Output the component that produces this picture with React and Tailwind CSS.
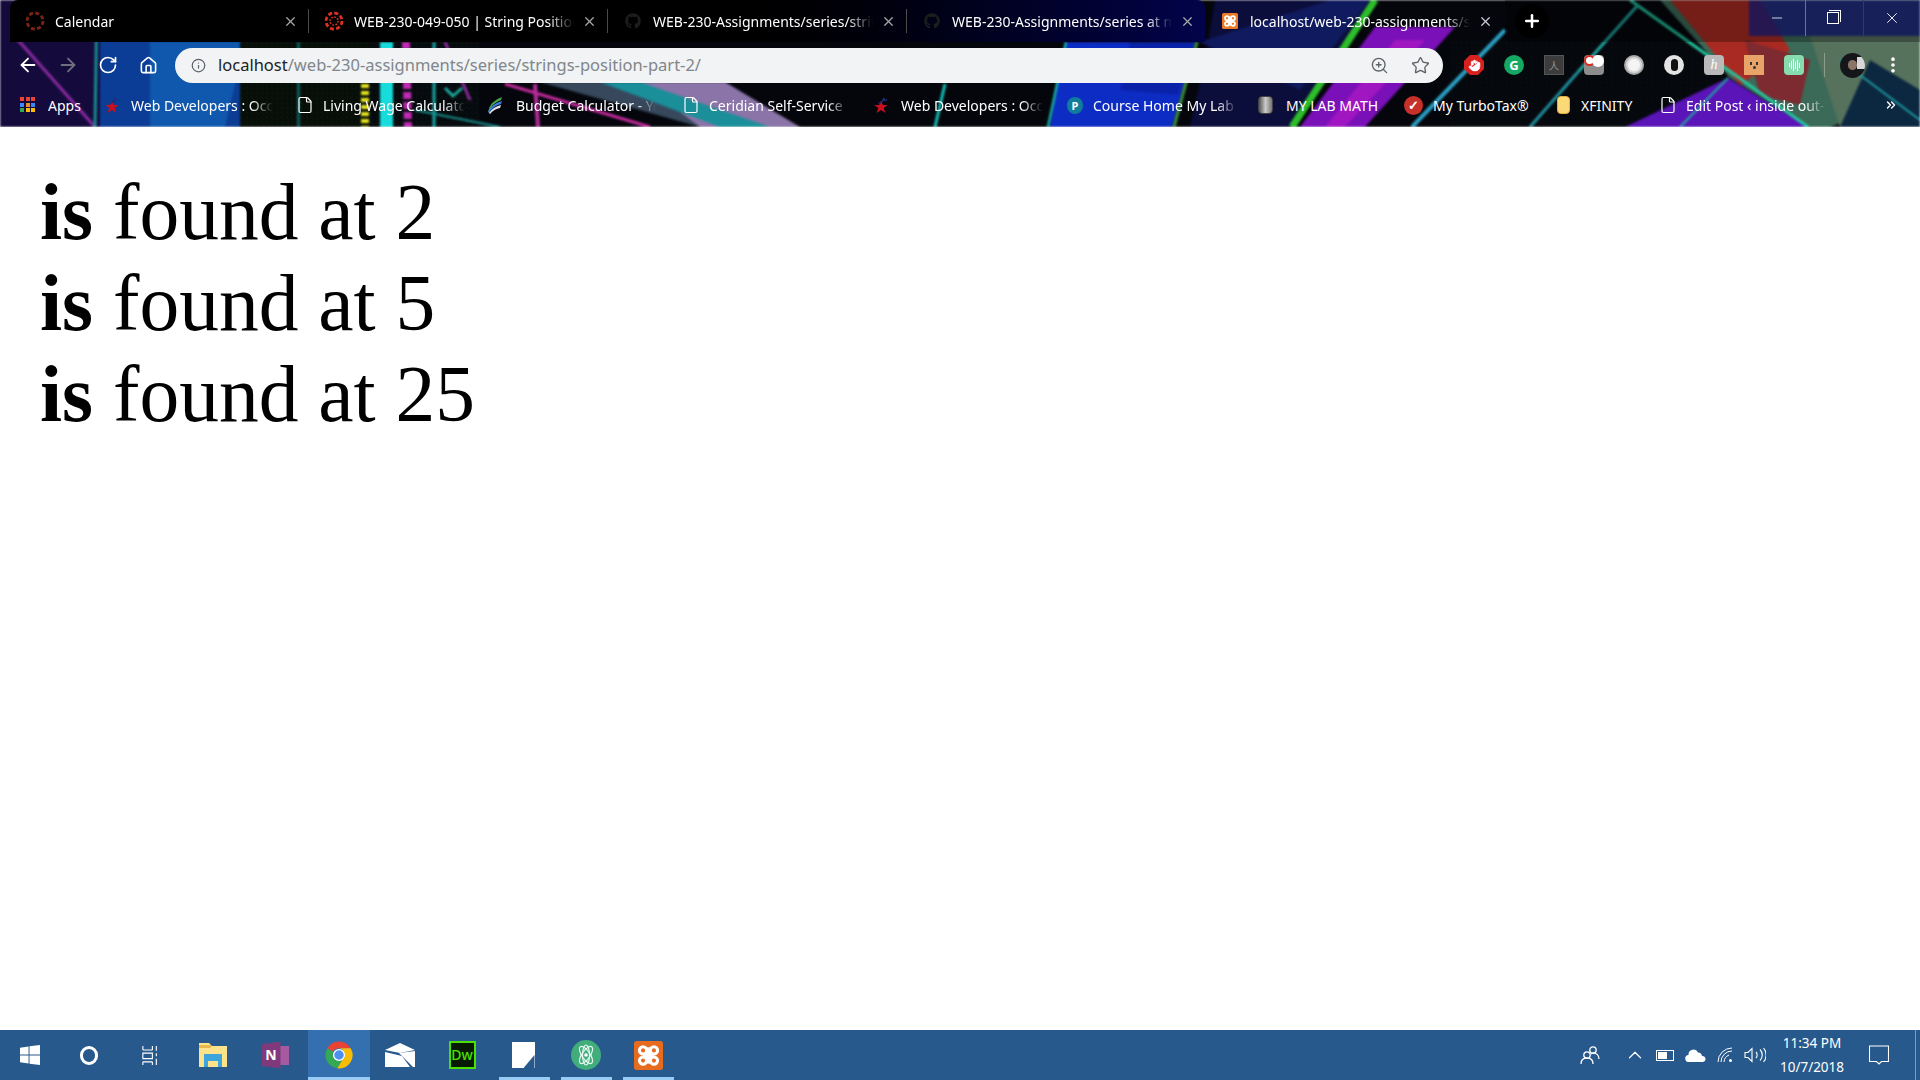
import React from "react";
import { ArrowLeft, ArrowRight, RotateCw, Home, Info, ZoomIn, Star, MoreVertical, File, X, Plus, Minus, ChevronsRight, ChevronUp, Hand } from "lucide-react";
import { FaGithub } from "react-icons/fa";

const Wallpaper = () => (
  <svg className="absolute inset-0 blur-[0.8px]" width="1920" height="127" viewBox="0 0 1920 127" preserveAspectRatio="none">
    <defs>
      <pattern id="dots" width="5" height="5" patternUnits="userSpaceOnUse">
        <rect x="1" y="2" width="1" height="1" fill="#2f5a2a" />
        <rect x="3" y="4" width="1" height="1" fill="#1c3a22" />
      </pattern>
    </defs>
    <rect width="1920" height="127" fill="#04060c" />
    <rect x="220" width="260" height="127" fill="url(#dots)" />
    <rect x="1450" y="40" width="300" height="87" fill="url(#dots)" opacity="0.5" />
    <rect x="0" width="100" height="127" fill="#140a3c" />
    <rect x="100" width="140" height="127" fill="#0c3d96" />
    <polygon points="150,42 245,42 225,127 150,127" fill="#0f58ad" />
    <line x1="18" y1="40" x2="95" y2="127" stroke="#8a2aa0" strokeWidth="3" />
    <line x1="97" y1="0" x2="95" y2="127" stroke="#178f92" strokeWidth="3" />
    <rect x="240" y="42" width="130" height="85" fill="#050a06" />
    <rect x="240" y="42" width="130" height="85" fill="url(#dots)" />
    <rect x="297" y="42" width="3" height="85" fill="#12a8a8" opacity="0.5" />
    <line x1="365" y1="84" x2="365" y2="127" stroke="#e8e81e" strokeWidth="8" strokeDasharray="4 3" />
    <rect x="380" y="42" width="13" height="85" fill="#17dcdc" />
    <line x1="406" y1="42" x2="408" y2="127" stroke="#c02ab5" strokeWidth="8" strokeDasharray="7 3" />
    <line x1="434" y1="42" x2="434" y2="127" stroke="#16a6a6" strokeWidth="3" />
    <polyline points="445,88 453,96 462,88" fill="none" stroke="#1cb5a8" strokeWidth="2.5" />
    <line x1="445" y1="42" x2="470" y2="100" stroke="#8d2a9e" strokeWidth="3" />
    <line x1="415" y1="110" x2="500" y2="127" stroke="#188f8f" strokeWidth="2" />
    <polygon points="540,82 700,82 800,127 700,127" fill="#37485c" />
    <polygon points="640,82 725,82 800,127 700,127" fill="#8a74a8" />
    <polygon points="600,82 640,82 770,127 720,127" fill="#1a8f9a" />
    <line x1="505" y1="84" x2="650" y2="127" stroke="#c92aa0" strokeWidth="3" />
    <line x1="535" y1="84" x2="538" y2="127" stroke="#b52c9a" strokeWidth="4" />
    <line x1="945" y1="84" x2="935" y2="127" stroke="#14c0b8" strokeWidth="3" />
    <polygon points="1065,42 1195,42 1172,127 1050,127" fill="#0d2cc4" />
    <polygon points="1130,42 1195,42 1178,95 1120,90" fill="#0a22a8" />
    <line x1="1066" y1="42" x2="1048" y2="127" stroke="#17b4a8" strokeWidth="2.5" />
    <line x1="1197" y1="42" x2="1174" y2="127" stroke="#3f8f3a" strokeWidth="3" />
    <polygon points="1215,0 1378,0 1320,80 1295,127 1190,127 1205,60" fill="#0b0d3a" />
    <polygon points="1200,42 1330,0 1370,0 1300,90" fill="#101a5e" />
    <line x1="1375" y1="0" x2="1292" y2="127" stroke="#2dbd2a" strokeWidth="7" />
    <polygon points="1375,27 1455,27 1365,127 1300,127" fill="#7a10b8" />
    <polygon points="1395,40 1425,40 1345,127 1325,127" fill="#a016c0" />
    <line x1="1505" y1="30" x2="1412" y2="127" stroke="#2a9fc4" strokeWidth="4" />
    <polygon points="1660,0 1920,0 1920,95 1830,127 1808,127 1730,78" fill="#3c6a58" />
    <polygon points="1670,0 1760,0 1790,50 1740,85" fill="#a82a22" />
    <polygon points="1745,40 1810,60 1800,105 1760,95" fill="#7d2a30" />
    <polygon points="1810,36 1920,36 1920,90 1840,127" fill="#56725c" />
    <polygon points="1870,60 1920,90 1920,127 1840,127" fill="#0c2740" />
    <polygon points="1728,78 1808,127 1625,127" fill="#5a14b8" />
    <line x1="1630" y1="0" x2="1808" y2="127" stroke="#23c8a0" strokeWidth="3" />
    <line x1="1638" y1="5" x2="1578" y2="72" stroke="#20a8a0" strokeWidth="3" />
    <line x1="1578" y1="72" x2="1530" y2="127" stroke="#1f8fa0" strokeWidth="3" />
    <line x1="1728" y1="78" x2="1680" y2="127" stroke="#1fa8a0" strokeWidth="2" />
    <line x1="1840" y1="60" x2="1920" y2="120" stroke="#1c9aa0" strokeWidth="2" />
    <polygon points="1749,0 1920,0 1920,36 1749,36" fill="#1a1f8c" opacity="0.78" />
  </svg>
);

const Canvas = ({ color, inner }) => (
  <svg width="20" height="20" viewBox="0 0 20 20" className="shrink-0 -m-0.5">
    <circle cx="10" cy="10" r="8" fill="none" stroke={color} strokeWidth="2.8" strokeDasharray="4 2.3" />
    {inner && <circle cx="10" cy="10" r="4" fill="none" stroke={color} strokeWidth="1.6" strokeDasharray="1.6 1.5" />}
  </svg>
);

const Xampp = ({ size = 16, fill = "#ea7a25" }) => (
  <svg width={size} height={size} viewBox="0 0 16 16" className="shrink-0">
    <rect width="16" height="16" rx="1.5" fill={fill} />
    <g fill="none" stroke="#fff" strokeWidth="1.7">
      <circle cx="5" cy="5.200" r="2" />
      <circle cx="11" cy="5.200" r="2" />
      <circle cx="5" cy="10.800" r="2" />
      <circle cx="11" cy="10.800" r="2" />
    </g>
    <rect x="5" y="6.800" width="6" height="2.400" fill="#fff" />
    <rect x="6.800" y="3.500" width="2.400" height="9" fill="#fff" />
  </svg>
);

const Tab = ({ icon, title, width, sep = true, active }) => (
  <div className={`flex items-center h-full pl-[17px] shrink-0 ${width}`}>
    <span className="w-4 h-4 flex items-center justify-center shrink-0">{icon}</span>
    <span className="ml-3 w-[220px] whitespace-nowrap overflow-hidden text-white text-[14px] [mask-image:linear-gradient(to_right,black_88%,transparent)]">{title}</span>
    <X size={15} strokeWidth={2} className={`ml-[8px] shrink-0 ${active ? "text-[#c8c8d8]" : "text-[#a8a8a8]"}`} />
    {sep && <span className="ml-auto w-px h-[24px] bg-[#4a4a4a]" />}
  </div>
);

const StarFlag = () => (
  <svg width="16" height="16" viewBox="0 0 18 18">
    <polygon points="9,4 11,9 16.500,9 12,12.500 14,18 9,14.500 4,18 6,12.500 1.500,9 7,9" fill="#c8101e" />
    <path d="M6 7 Q11 7 12 1 L13 4 L16 3" fill="none" stroke="#1d2f7a" strokeWidth="1.400" />
  </svg>
);

const Doc = () => <File size={18} strokeWidth={1.6} className="text-white shrink-0" />;

const Mark = ({ icon, text, iconBox, gap, w, fade = true }) => (
  <div className={`flex items-center shrink-0 ${iconBox}`}>
    <span className="w-4 h-4 flex items-center justify-center shrink-0">{icon}</span>
    <span className={`${gap} ${w} overflow-hidden whitespace-nowrap text-white text-[14px] ${fade ? "[mask-image:linear-gradient(to_right,black_85%,transparent)]" : ""}`}>{text}</span>
  </div>
);

const ExtIcon = ({ children }) => <div className="w-10 h-6 flex items-center justify-center shrink-0">{children}</div>;

const Bar = ({ w, active, under, children }) => (
  <div className={`relative h-full flex items-center justify-center shrink-0 ${w} ${active ? "bg-[#3470b0]" : ""}`}>
    {children}
    {under && <span className={`absolute bottom-0 h-[3px] bg-[#99ccf5] ${under}`} />}
  </div>
);

export default function App() {
  return (
    <div className="w-[1920px] h-screen overflow-hidden flex flex-col bg-white">
      <header className="relative h-[127px] shrink-0 overflow-hidden font-['Noto_Sans',sans-serif]">
        <Wallpaper />
        <div className="relative flex h-[42px] pl-[10px]">
          <div className="flex h-full w-[1195px] shrink-0 rounded-t-lg bg-linear-to-r from-black from-55% to-[#02034a]">
            <Tab width="w-[299px]" icon={<Canvas color="#7c2413" />} title="Calendar" />
            <Tab width="w-[299px]" icon={<Canvas color="#e2301f" inner />} title="WEB-230-049-050 | String Position" />
            <Tab width="w-[299px]" icon={<FaGithub size={16} className="text-[#1d1d1d]" />} title="WEB-230-Assignments/series/strings" />
            <Tab width="w-[298px]" sep={false} icon={<FaGithub size={16} className="text-[#1d1d1d]" />} title="WEB-230-Assignments/series at master" />
          </div>
          <Tab width="w-[300px]" sep={false} active icon={<Xampp />} title="localhost/web-230-assignments/series" />
          <div className="flex-1 flex items-start bg-black/30 rounded-bl-lg">
            <div className="ml-[10px] mt-1 w-[34px] h-[34px] rounded-full bg-black flex items-center justify-center">
              <Plus size={20} strokeWidth={3} className="text-white" />
            </div>
            <div className="ml-auto h-9 flex text-white">
              <div className="w-14 flex items-center justify-center"><Minus size={16} strokeWidth={1.2} /></div>
              <div className="w-[58px] flex items-center justify-center border-l border-[#1a9a9a] pr-1">
                <span className="relative w-3 h-3 border border-white"><span className="absolute -top-[3px] -right-[3px] w-3 h-3 border-t border-r border-white" /></span>
              </div>
              <div className="w-[57px] flex items-center justify-center border-l border-[#1a3aa0]"><X size={18} strokeWidth={1.2} /></div>
            </div>
          </div>
        </div>

        <div className="relative flex items-center h-[46px]">
          <div className="flex items-center pl-2 shrink-0">
            <div className="w-10 flex justify-center"><ArrowLeft size={22} strokeWidth={2} className="text-white" /></div>
            <div className="w-10 flex justify-center"><ArrowRight size={22} strokeWidth={2} className="text-[#6f6f80]" /></div>
            <div className="w-10 flex justify-center"><RotateCw size={20} strokeWidth={2} className="text-white" /></div>
            <div className="w-10 flex justify-center"><Home size={19} strokeWidth={2} className="text-white" /></div>
          </div>
          <div className="ml-[7px] w-[1268px] h-[35px] rounded-full bg-[#f1f3f4] flex items-center shrink-0 pl-4 pr-[13px]">
            <Info size={15} strokeWidth={2} className="text-[#5f6368] shrink-0" />
            <span className="ml-[12px] text-[16.5px] whitespace-nowrap text-[#202124]">localhost<span className="text-[#80868b]">/web-230-assignments/series/strings-position-part-2/</span></span>
            <ZoomIn size={19} strokeWidth={1.7} className="ml-auto text-[#5f6368]" />
            <Star size={19} strokeWidth={1.7} className="ml-[22px] text-[#5f6368]" />
          </div>
          <div className="ml-[11px] flex items-center shrink-0">
            <ExtIcon><span className="w-5 h-5 bg-[#d8201f] flex items-center justify-center [clip-path:polygon(30%_0,70%_0,100%_30%,100%_70%,70%_100%,30%_100%,0_70%,0_30%)]"><Hand size={13} fill="#fff" strokeWidth={1} className="text-white" /></span></ExtIcon>
            <ExtIcon><span className="w-5 h-5 rounded-full bg-[#15a862] text-white flex items-center justify-center font-bold text-[13px] leading-none">G</span></ExtIcon>
            <ExtIcon><span className="w-5 h-5 bg-[#3c3c3c] border border-[#555] text-[#999] text-[10px] leading-none flex items-center justify-center">人</span></ExtIcon>
            <ExtIcon><span className="relative w-5 h-5 rounded-sm bg-[#8c8c8c] overflow-hidden flex items-start justify-start"><span className="w-[11px] h-[11px] rounded-full border-2 border-[#d82a20] bg-white" /><span className="absolute right-0 top-0 w-3 h-3 bg-white rounded-full" /></span></ExtIcon>
            <ExtIcon><span className="w-5 h-5 rounded-full bg-[#d8d8d8] flex items-center justify-center border-2 border-[#aaa]"><span className="w-3 h-3 rounded-full bg-[#f4f4f4]" /></span></ExtIcon>
            <ExtIcon><span className="w-5 h-5 rounded-full bg-[#e4e4e4] flex items-center justify-center"><span className="w-[7px] h-3 rounded-full bg-[#111]" /></span></ExtIcon>
            <ExtIcon><span className="w-5 h-5 rounded-sm bg-[#b9b9b9] text-white italic text-[14px] leading-none flex items-center justify-center font-['Liberation_Serif',serif]">h</span></ExtIcon>
            <ExtIcon><span className="w-5 h-5 bg-[#e8a468] flex flex-col items-center justify-center gap-px"><span className="flex gap-1"><span className="w-[2px] h-[3px] bg-[#333]" /><span className="w-[2px] h-[3px] bg-[#333]" /></span><span className="w-[3px] h-[3px] rounded-full bg-[#333]" /></span></ExtIcon>
            <ExtIcon><span className="w-5 h-5 rounded-sm bg-[#86dcae] flex items-center justify-center gap-px">{[4, 8, 12, 7, 11, 5].map((h, i) => <span key={i} className="w-px bg-white" style={{ height: h }} />)}</span></ExtIcon>
          </div>
          <span className="ml-[10px] w-px h-[24px] bg-white/30" />
          <div className="ml-[15px] w-[25px] h-[25px] rounded-full bg-[#15161a] overflow-hidden flex items-center justify-center relative shrink-0">
            <span className="absolute right-0 top-1 w-2 h-3 bg-[#d8d8d8]" />
            <span className="w-[9px] h-[10px] rounded-full bg-[#8a7568]" />
          </div>
          <MoreVertical size={20} strokeWidth={2.4} className="ml-[18px] text-white shrink-0" />
        </div>

        <div className="relative flex items-center h-[34px] pl-[20px]">
          <Mark iconBox="w-[84px]" gap="ml-3" w="w-[40px]" fade={false} text="Apps" icon={
            <span className="grid grid-cols-3 gap-px w-4 h-4">
              {["#ea4335","#ea4335","#ea4335","#4285f4","#ea8a35","#4285f4","#34a853","#fbbc05","#fbbc05"].map((c, i) => <span key={i} className="w-1 h-1" style={{ background: c }} />)}
            </span>} />
          <Mark iconBox="w-[193px]" gap="ml-[11px]" w="w-[142px]" text="Web Developers : Occupational" icon={<StarFlag />} />
          <Mark iconBox="w-[190px]" gap="ml-[10px]" w="w-[142px]" text="Living Wage Calculator" icon={<Doc />} />
          <Mark iconBox="w-[196px]" gap="ml-[13px]" w="w-[140px]" text="Budget Calculator - Your" icon={
            <svg width="18" height="18" viewBox="0 0 18 18" className="shrink-0"><path d="M2 16 Q4 5 16 1 L15 4 Q6 7 3 16z" fill="#4aa84a"/><path d="M2 16 Q5 8 16 5 L15 8 Q7 10 3 17z" fill="#3a7ad8"/><path d="M3 17 Q7 11 15 9 L14 12 Q8 13 4 18z" fill="#e8e8f0"/></svg>} />
          <Mark iconBox="w-[190px]" gap="ml-[10px]" w="w-[140px]" text="Ceridian Self-Service" icon={<Doc />} />
          <Mark iconBox="w-[194px]" gap="ml-[12px]" w="w-[142px]" text="Web Developers : Occupational" icon={<StarFlag />} />
          <Mark iconBox="w-[190px]" gap="ml-[10px]" w="w-[145px]" text="Course Home My Lab Math" icon={<span className="w-4 h-[17px] rounded-full bg-[#0f7c9c] text-white text-[11px] leading-none flex items-center justify-center font-bold">P</span>} />
          <Mark iconBox="w-[148px]" gap="ml-[13px]" w="w-[100px]" fade={false} text="MY LAB MATH" icon={<span className="w-[15px] h-[18px] shrink-0 rounded-sm bg-linear-to-r from-[#555] via-[#ccc] to-[#777] border border-[#444]" />} />
          <Mark iconBox="w-[150px]" gap="ml-[12px]" w="w-[110px]" fade={false} text="My TurboTax®" icon={<span className="w-[19px] h-[19px] shrink-0 rounded-full bg-[#c8302a] text-white text-[13px] leading-none font-bold flex items-center justify-center">✓</span>} />
          <Mark iconBox="w-[105px]" gap="ml-[10px]" w="w-[70px]" fade={false} text="XFINITY" icon={<span className="w-[13px] h-[18px] shrink-0 rounded-sm bg-[#fcd977] border border-[#e0b040]" />} />
          <Mark iconBox="w-[195px]" gap="ml-[10px]" w="w-[140px]" text="Edit Post ‹ inside out-loud" icon={<Doc />} />
          <ChevronsRight size={14} strokeWidth={2.4} className="ml-[29px] text-white" />
        </div>
      </header>

      <main className="flex-1 p-[40px] bg-white text-black text-[79.5px] leading-[91px] font-['Liberation_Serif','Times_New_Roman',serif]">
        <div><b>is</b> found at 2</div>
        <div><b>is</b> found at 5</div>
        <div><b>is</b> found at 25</div>
      </main>

      <footer className="h-[50px] shrink-0 bg-[#28598c] flex items-stretch text-white font-['Noto_Sans',sans-serif]">
        <Bar w="w-[60px]">
          <svg width="20" height="20" viewBox="0 0 21 21" fill="#fff"><polygon points="0,3 9,1.600 9,10 0,10" /><polygon points="10,1.400 21,0 21,10 10,10" /><polygon points="0,11 9,11 9,19.400 0,18" /><polygon points="10,11 21,11 21,21 10,19.600" /></svg>
        </Bar>
        <Bar w="w-[58px]"><span className="w-[18px] h-[19px] rounded-full border-[3px] border-white" /></Bar>
        <Bar w="w-[64px]">
          <svg width="20" height="19" viewBox="0 0 20 24" fill="none" stroke="#fff" strokeWidth="1.400"><path d="M1 5h12M13 0v5M1 0v5M1 9h12v7H1zM1 20h12M1 24v-4M13 24v-4M18 0v6M18 9v4M18 16v8" /></svg>
        </Bar>
        <Bar w="w-[62px]">
          <svg width="28" height="24" viewBox="0 0 28 24"><path d="M0 0h10l3 3h15v21H0z" fill="#fce28a" /><rect x="0" y="2" width="12" height="3" fill="#e8b84a" /><path d="M5 11h18v13h-4v-6h-10v6H5z" fill="#3da4dc" /><rect x="9" y="18" width="10" height="6" fill="#fce28a" /></svg>
        </Bar>
        <Bar w="w-[62px]">
          <div className="relative w-[27px] h-[27px] flex items-center">
            <span className="absolute right-0 top-[4px] w-[13px] h-[19px] bg-[#a65aa0]" />
            <span className="relative w-[19px] h-[27px] bg-[#80397b] flex items-center justify-center text-white font-bold text-[14px] leading-none [clip-path:polygon(0_10%,100%_0,100%_100%,0_90%)]">N</span>
          </div>
        </Bar>
        <div className="w-0.5" />
        <Bar w="w-[62px]" active under="left-0 right-0">
          <svg width="30" height="30" viewBox="0 0 36 36"><path d="M4 10 A16 16 0 0 1 32 10 L18 10 A8 8 0 0 0 11 14z" fill="#ea4335" /><path d="M4 10 A16 16 0 0 0 16 34 L22 24 A8 8 0 0 1 11 14z" fill="#34a853" /><path d="M16 34 A16 16 0 0 0 32 10 L18 10 A8 8 0 0 1 22 24z" fill="#fbbc05" /><circle cx="18" cy="18" r="6.500" fill="#4d90f0" stroke="#fff" strokeWidth="1.600" /></svg>
        </Bar>
        <Bar w="w-[60px]">
          <svg width="30" height="24" viewBox="0 0 30 24" fill="#fff"><path d="M0 7 L15 0 L30 7 L15 10 z" /><path d="M0 9 L17 13 L25 24 H0z" /><path d="M14 10 L30 8 V24 H28z" /></svg>
        </Bar>
        <Bar w="w-[64px]">
          <span className="w-[27px] h-[28px] bg-[#061a04] border-2 border-[#4ae000] text-[#4ae000] text-[14px] font-medium flex items-center justify-center leading-none">Dw</span>
        </Bar>
        <Bar w="w-[58px]" under="left-[5px] right-[2px]">
          <span className="relative w-[23px] h-[26px] bg-white"><span className="absolute right-0 bottom-0 w-[11px] h-[13px] bg-[#28598c] [clip-path:polygon(100%_0,100%_100%,0_100%)]" /></span>
        </Bar>
        <Bar w="w-[68px]" under="left-[9px] right-[8px]">
          <svg width="30" height="30" viewBox="0 0 30 30"><circle cx="15" cy="15" r="15" fill="#41ad7b" /><g fill="none" stroke="#e6f6ee" strokeWidth="1.200"><ellipse cx="15" cy="15" rx="4" ry="10" transform="rotate(35 15 15)" /><ellipse cx="15" cy="15" rx="4" ry="10" transform="rotate(-35 15 15)" /><ellipse cx="15" cy="15" rx="3.500" ry="10" /></g><circle cx="15" cy="15" r="1.800" fill="#fff" /></svg>
        </Bar>
        <Bar w="w-[56px]" under="left-[3px] right-[2px]">
          <Xampp size={29} fill="#e66b1f" />
        </Bar>
        <div className="flex-1" />
        <Bar w="w-[30px]">
          <svg width="20" height="20" viewBox="0 0 20 20" fill="none" stroke="#fff" strokeWidth="1.300"><circle cx="13" cy="5" r="3.200" /><circle cx="7" cy="10" r="3.200" /><path d="M1 19c0-4 2.500-6 6-6s6 2 6 6M11 9c1-.5 1.500-1 2-1 3 0 6 2 6 6" /></svg>
        </Bar>
        <div className="w-[15px]" />
        <Bar w="w-[30px]"><ChevronUp size={22} strokeWidth={1.3} /></Bar>
        <Bar w="w-[30px]"><span className="w-[18px] h-[11px] border border-white p-px flex"><span className="w-[9px] bg-white" /></span></Bar>
        <Bar w="w-[30px]">
          <svg width="21" height="13" viewBox="0 0 21 13" fill="#fff"><path d="M4 13a3.500 3.500 0 0 1-.5-7A5 5 0 0 1 13 3.500a4 4 0 0 1 4 3.500 3 3 0 0 1 1 6z" /></svg>
        </Bar>
        <Bar w="w-[30px]">
          <svg width="16" height="16" viewBox="0 0 16 16" fill="none" stroke="#fff" strokeWidth="1"><path d="M1 15A14 14 0 0 1 15 1M4 15A11 11 0 0 1 15 4M7 15a8 8 0 0 1 5-7" /><circle cx="13.500" cy="13.500" r="1.500" fill="#fff" stroke="none" /></svg>
        </Bar>
        <Bar w="w-[30px]">
          <svg width="22" height="16" viewBox="0 0 22 16" fill="none" stroke="#fff" strokeWidth="1.100"><path d="M1 5.500h3l4-4v13l-4-4H1zM12 5c1.500 1.500 1.500 4.500 0 6M16 2.500c3 3 3 8 0 11M19.500 1c3.500 4 3.500 10 0 14" /></svg>
        </Bar>
        <div className="w-[84px] flex flex-col items-center justify-center text-[13.5px] leading-[24px] shrink-0">
          <span>11:34 PM</span>
          <span>10/7/2018</span>
        </div>
        <Bar w="w-[50px]">
          <svg width="20" height="20" viewBox="0 0 20 20" fill="none" stroke="#fff" strokeWidth="1.100"><path d="M0.500 1h19v15.500h-7l-2.500 2.500-2.500-2.500h-7z" /></svg>
        </Bar>
        <div className="w-[11px]" />
        <div className="w-px bg-[#7a9cc0]" />
        <div className="w-1" />
      </footer>
    </div>
  );
}
